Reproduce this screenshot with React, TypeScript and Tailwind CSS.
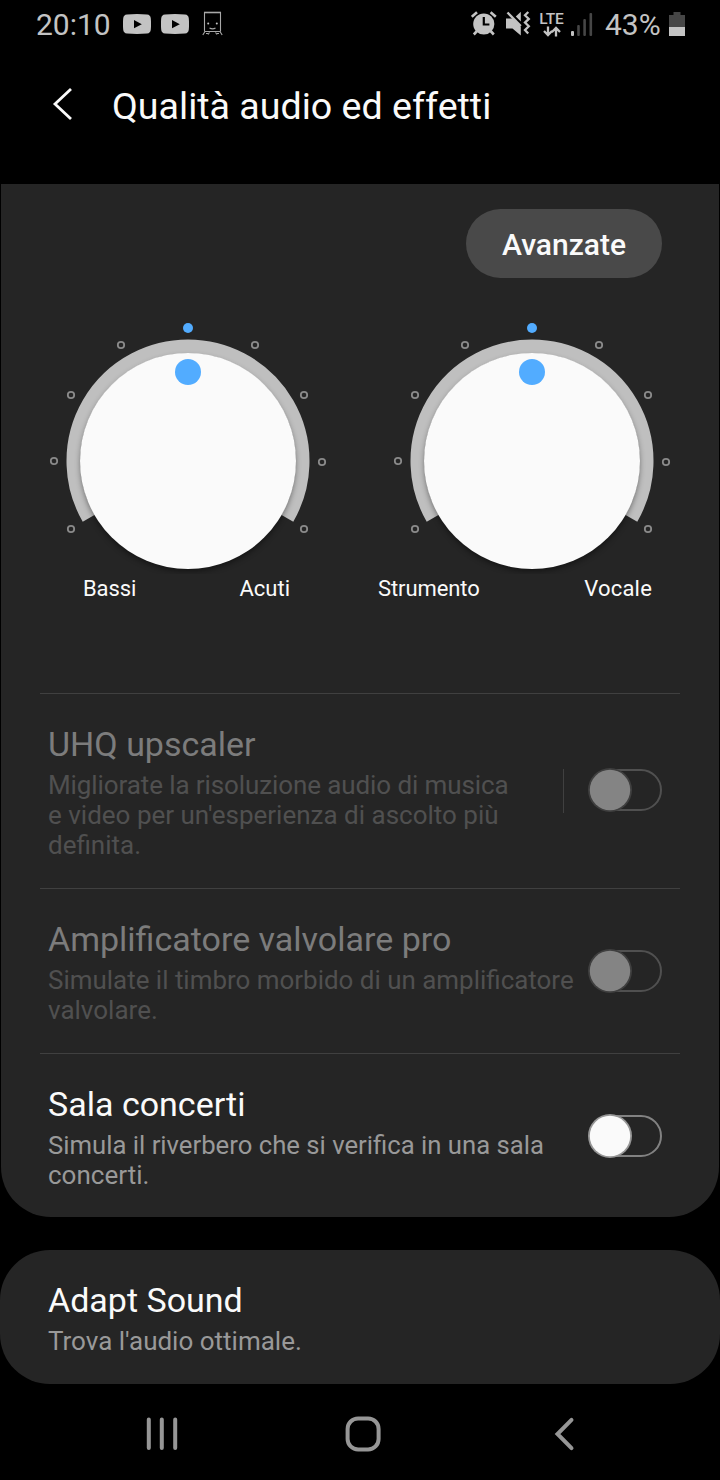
import type { ReactNode } from "react";

const tickOffsets = [
  [-117, 68],
  [-134, 0],
  [-117, -66],
  [-67, -116],
  [67, -116],
  [116, -66],
  [134, 1],
  [116, 68],
];

function Knob({ id }: { id: string }) {
  return (
    <svg width="344" height="259" viewBox="-172 -146 344 259" className="block">
      <defs>
        <filter id={id} x="-20%" y="-20%" width="140%" height="140%">
          <feGaussianBlur stdDeviation="3" />
        </filter>
      </defs>
      <path d="M-99.2 57.25A114.5 114.5 0 1 1 99.2 57.25" fill="none" stroke="#bfbfbf" strokeWidth="14" />
      <circle cx="0" cy="3" r="107" fill="#000" opacity="0.5" filter={`url(#${id})`} />
      <circle cx="0" cy="0" r="108" fill="#fafafa" />
      <circle cx="0" cy="-89" r="13" fill="#52acff" />
      <circle cx="0" cy="-133" r="5" fill="#52acff" />
      {tickOffsets.map(([x, y]) => (
        <circle key={`${x},${y}`} cx={x} cy={y} r="3.2" fill="none" stroke="#8a8a8a" strokeWidth="1.8" />
      ))}
    </svg>
  );
}

function Toggle({ disabled = false }: { disabled?: boolean }) {
  return (
    <svg width="76" height="46" viewBox="0 0 76 46" className="block">
      <rect x="3" y="3" width="71" height="40" rx="20" fill="none" stroke={disabled ? "#505050" : "#828282"} strokeWidth="2" />
      <circle cx="23" cy="23" r="22" fill={disabled ? "#3f3f3f" : "#969696"} />
      <circle cx="23" cy="23" r="20.2" fill={disabled ? "#848484" : "#fafafa"} />
    </svg>
  );
}

function Row({
  title,
  children,
  disabled = false,
  control,
}: {
  title: string;
  children: ReactNode;
  disabled?: boolean;
  control?: ReactNode;
}) {
  return (
    <div className="flex items-center justify-between pr-[57px] pl-12">
      <div className="pt-[30px] pb-7 whitespace-nowrap">
        <h2 className={`text-[34px] leading-[41px] ${disabled ? "text-[#7c7c7c]" : "text-[#fafafa]"}`}>{title}</h2>
        <p className={`mt-[5px] text-[26px] leading-[30px] ${disabled ? "text-[#505050]" : "text-[#999999]"}`}>
          {children}
        </p>
      </div>
      {control}
    </div>
  );
}

function Divider() {
  return <div className="mx-10 h-px bg-[#404040]" />;
}

function VideoIcon() {
  return (
    <svg width="28" height="20" viewBox="0 0 28 20">
      <path d="M4 .5Q14-.4 24 .5 27.500.8 27.800 4.500Q28.300 10 27.800 15.500 27.500 19.200 24 19.500 14 20.400 4 19.500 .5 19.200.2 15.500-.3 10 .2 4.500.5.8 4 .5Z" fill="#c3c3c3" />
      <path d="M11 6v8.300l7.800-4.100Z" fill="#000" />
    </svg>
  );
}

function TrainIcon() {
  return (
    <svg width="22" height="26" viewBox="0 0 22 26" fill="none" stroke="#a8a8a8" strokeWidth="1.1">
      <path d="M2.500 20.500V1.500h16v19" />
      <path d="M2 1.500h17" strokeWidth="1.600" />
      <path d="M2.500 20.500h16M3 20.500.8 24M18 20.500l2.200 3.500M4 22.500h2M15 22.500h2M7.500 21.500l-1.500 2M13.500 21.500l1.500 2" />
      <path d="M7.500 17q3.200 1.800 6 0" />
      <circle cx="6.200" cy="12.500" r="1" fill="#c3c3c3" stroke="none" />
      <circle cx="14.800" cy="12.500" r="1" fill="#c3c3c3" stroke="none" />
    </svg>
  );
}

function AlarmIcon() {
  return (
    <svg width="26" height="25" viewBox="0 0 26 25">
      <circle cx="12.800" cy="13" r="10.600" fill="#c3c3c3" />
      <path d="M.8 5.800 6 1.200M24.800 5.800 19.600 1.200" stroke="#c3c3c3" strokeWidth="2.600" />
      <path d="M6 20 2.800 23.500M19.600 20l3.200 3.500" stroke="#c3c3c3" strokeWidth="2.600" />
      <path d="M12.800 6v7.500h5.600" fill="none" stroke="#000" strokeWidth="2.200" />
    </svg>
  );
}

function MutedVibrateIcon() {
  return (
    <svg width="25" height="25" viewBox="0 0 25 25">
      <path d="M0 7.500H6.500L14.800 15.800V24.500L6.500 17.500H0Z" fill="#c3c3c3" />
      <path d="M14.800.8v9.700L9.800 5.500Z" fill="#c3c3c3" />
      <path d="M1.500 1.500 14.800 15" stroke="#c3c3c3" strokeWidth="2.400" />
      <path d="m22.300 1-3.300 3.300 3.800 3.600-3.800 3.700 3.800 3.700-3.800 3.700 3.200 3.500" fill="none" stroke="#c3c3c3" strokeWidth="2.300" />
    </svg>
  );
}

function LteIcon() {
  return (
    <div className="flex h-[26px] w-[25px] flex-col items-center">
      <span className="text-[15.500px] leading-[13px] font-medium tracking-[-0.1px]">LTE</span>
      <svg width="18" height="11" viewBox="0 0 18 11" className="block" fill="none" stroke="#c3c3c3" strokeWidth="2.300">
        <path d="M5 .5v8.500M1 5l4 4 4-4M13 10.500V2M9 6l4-4 4 4" />
      </svg>
    </div>
  );
}

function SignalIcon() {
  return (
    <svg width="22" height="24" viewBox="0 0 22 24">
      <rect x="0" y="18" width="3" height="5" rx="1" fill="#c3c3c3" />
      <rect x="6.200" y="12" width="2.600" height="11" rx="1" fill="#464646" />
      <rect x="12.300" y="6" width="2.600" height="17" rx="1" fill="#464646" />
      <rect x="18.500" y="0" width="2.600" height="23" rx="1" fill="#464646" />
    </svg>
  );
}

function BatteryIcon() {
  return (
    <svg width="16" height="24" viewBox="0 0 16 24">
      <path d="M4.500 0h7v3H16v12H0V3h4.500Z" fill="#464646" />
      <path d="M0 15h16v9H0Z" fill="#c3c3c3" />
    </svg>
  );
}

export default function App() {
  return (
    <div className="flex h-[1480px] w-[720px] flex-col overflow-hidden bg-black font-['Roboto',sans-serif] text-[#fafafa]">
      <div className="flex h-[50px] items-start pt-[11px] pr-[35px] pl-9 text-[#c3c3c3]">
        <span className="w-[87px] text-[30px] leading-[27px]">20:10</span>
        <div className="flex gap-[10px] pt-[3px]">
          <VideoIcon />
          <VideoIcon />
        </div>
        <div className="ml-[4px] pl-[9px]">
          <TrainIcon />
        </div>
        <div className="ml-auto flex items-start">
          <div className="w-[35px]"><AlarmIcon /></div>
          <div className="w-[33px]"><MutedVibrateIcon /></div>
          <div className="mt-[2px] w-[32px]"><LteIcon /></div>
          <div className="mt-[2px] w-[34px]"><SignalIcon /></div>
          <span className="w-[64px] text-[30px] leading-[27px]">43%</span>
          <div className="mt-[1px]"><BatteryIcon /></div>
        </div>
      </div>

      <header className="flex h-[134px] items-start pt-[31px] pl-[52px]">
        <svg width="22" height="34" viewBox="0 0 22 34" className="mt-[6px] block" fill="none" stroke="#fafafa" strokeWidth="2.800">
          <path d="M19 2 3 17l16 15" />
        </svg>
        <h1 className="ml-[38px] text-[37.6px] leading-[51px] whitespace-nowrap">Qualità audio ed effetti</h1>
      </header>

      <section className="mx-px h-[1033px] rounded-b-[50px] bg-[#252525]">
        <div className="flex justify-end pt-[25px] pr-[57px]">
          <button className="h-[69px] w-[196px] rounded-full bg-[#494949] pt-[1px] text-[30px] font-medium">Avanzate</button>
        </div>
        <div className="mt-[37px] flex pl-[15px]">
          <div>
            <Knob id="shade-tone" />
            <div className="flex justify-between pr-[70px] pl-[67px] text-[22px] leading-[30px]">
              <span className="tracking-[-0.1px]">Bassi</span>
              <span>Acuti</span>
            </div>
          </div>
          <div>
            <Knob id="shade-voice" />
            <div className="flex justify-between pr-[52px] pl-[18px] text-[22px] leading-[30px]">
              <span className="tracking-[-0.1px]">Strumento</span>
              <span className="tracking-[0.2px]">Vocale</span>
            </div>
          </div>
        </div>
        <div className="mx-[-1px] pt-[89px]">
          <Divider />
          <Row
            title="UHQ upscaler"
            disabled
            control={
              <div className="flex items-center pb-[2px]">
                <div className="mt-[2px] mr-[23px] h-[44px] w-px bg-[#404040]" />
                <Toggle disabled />
              </div>
            }
          >
            <span className="block tracking-[-0.1px]">Migliorate la risoluzione audio di musica</span>
            <span className="block">e video per un'esperienza di ascolto più</span>
            <span className="block">definita.</span>
          </Row>
          <Divider />
          <Row title="Amplificatore valvolare pro" disabled control={<Toggle disabled />}>
            <span className="block text-[25.950px]">Simulate il timbro morbido di un amplificatore</span>
            <span className="block">valvolare.</span>
          </Row>
          <Divider />
          <Row title="Sala concerti" control={<Toggle />}>
            <span className="block text-[25.700px]">Simula il riverbero che si verifica in una sala</span>
            <span className="block">concerti.</span>
          </Row>
        </div>
      </section>

      <section className="mt-[33px] h-[134px] rounded-[50px] bg-[#252525]">
        <Row title="Adapt Sound">
          <span className="block">Trova l'audio ottimale.</span>
        </Row>
      </section>

      <nav className="flex h-[96px] items-start pt-[31px] pl-[145px]">
        <svg width="34" height="38" viewBox="0 0 34 38" fill="none" stroke="#969696" strokeWidth="4" strokeLinecap="round">
          <path d="M3.800 4.500v28.500M16.800 4.500v28.500M30.200 4.500v28.500" />
        </svg>
        <svg width="36" height="38" viewBox="0 0 36 38" className="ml-[166px]" fill="none" stroke="#969696" strokeWidth="4">
          <rect x="2.600" y="3.400" width="31" height="31" rx="10.500" />
        </svg>
        <svg width="22" height="38" viewBox="0 0 22 38" className="ml-[173px]" fill="none" stroke="#969696" strokeWidth="4" strokeLinecap="round">
          <path d="M17.500 4.800 3.500 19 17.500 33.200" />
        </svg>
      </nav>
    </div>
  );
}
